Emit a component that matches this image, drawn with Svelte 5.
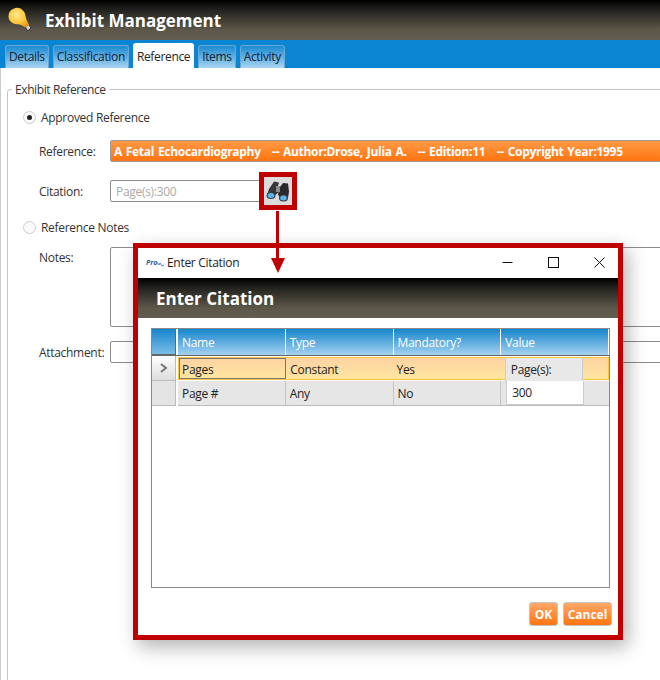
<script>
  const tabs = ['Details', 'Classification', 'Reference', 'Items', 'Activity'];
  const active = 'Reference';
  const columns = ['Name', 'Type', 'Mandatory?', 'Value'];
</script>

<div class="page">
  <header class="banner">
    <svg class="bulb" width="24" height="26" viewBox="0 0 24 26">
      <defs>
        <radialGradient id="bulbFill" cx="0.4" cy="0.35" r="0.7">
          <stop offset="0" stop-color="#ffe98a" />
          <stop offset="0.6" stop-color="#fdc63c" />
          <stop offset="1" stop-color="#e89a1c" />
        </radialGradient>
      </defs>
      <path d="M17.500 20l3-2.500 2.500 3.500-3.500 3z" fill="#d8d8d8" stroke="#333" stroke-width="1" />
      <path d="M0.500 9.500a8.500 8.500 0 0 1 15-5.500c2 2.500 2 5 2.500 7s1.500 4 3 6.500l-3.500 3c-2.500-1.500-4-2.500-6-3-3.500-.2-6-.5-8.500-2.500-1.500-1.500-2.500-3.500-2.500-5.500z" fill="url(#bulbFill)" />
    </svg>
    <h1>Exhibit Management</h1>
  </header>

  <nav class="tabs">
    {#each tabs as tab}
      <div class="tab" class:active={tab === active}>{tab}</div>
    {/each}
  </nav>

  <section class="content">
    <fieldset>
      <legend>Exhibit Reference</legend>

      <div class="radio-row">
        <span class="radio checked"></span>
        <span>Approved Reference</span>
      </div>
      <div class="row first">
        <span class="label">Reference:</span>
        <div class="field orange">A Fetal Echocardiography &nbsp; -- Author:Drose, Julia A. &nbsp; -- Edition:11 &nbsp; -- Copyright Year:1995</div>
      </div>
      <div class="row citation">
        <span class="label">Citation:</span>
        <div class="field short">Page(s):300</div>
        <div class="lookup">
          <svg width="24" height="22" viewBox="0 0 24 22">
            <path d="M8 1.500l5 1-1.500 5 1 5-6.500 5-5-2.500 2-6z" fill="#37373b" />
            <path d="M17 3l5 .5 1 8-1 6.500-7 1.500-3-5 1.500-7z" fill="#2a2a2e" />
            <path d="M10 6h4v6h-4z" fill="#8a8a8e" />
            <ellipse cx="5" cy="15.500" rx="4.500" ry="3.500" fill="#3c3c40" />
            <ellipse cx="5" cy="15.500" rx="3.300" ry="2.500" fill="#5ab4ee" />
            <ellipse cx="17.500" cy="18" rx="4.500" ry="3.500" fill="#3c3c40" />
            <ellipse cx="17.500" cy="18" rx="3.300" ry="2.500" fill="#5ab4ee" />
          </svg>
        </div>
      </div>
      <div class="radio-row notes-radio">
        <span class="radio"></span>
        <span>Reference Notes</span>
      </div>
      <div class="row notes">
        <span class="label">Notes:</span>
        <div class="field tall"></div>
      </div>
      <div class="row attachment">
        <span class="label">Attachment:</span>
        <div class="field"></div>
      </div>
    </fieldset>
  </section>

  <div class="connector">
    <span class="line"></span>
    <span class="head"></span>
  </div>

  <div class="dialog">
    <div class="titlebar">
      <span class="app-icon">Pro<svg width="7" height="7" viewBox="0 0 7 7"><path d="M0 2l2 3 1-2 2 3 2-1" fill="none" stroke="#5a7fa8" stroke-width="1" /></svg></span>
      <span class="window-title">Enter Citation</span>
      <div class="window-buttons">
        <svg width="11" height="11" viewBox="0 0 11 11"><path d="M0.500 5.500h10" stroke="#111" fill="none" /></svg>
        <svg width="11" height="11" viewBox="0 0 11 11"><rect x="0.500" y="0.500" width="10" height="10" stroke="#111" fill="none" /></svg>
        <svg width="11" height="11" viewBox="0 0 11 11"><path d="M0.500 0.500l10 10M10.500 0.500l-10 10" stroke="#111" fill="none" /></svg>
      </div>
    </div>
    <div class="dialog-banner">Enter Citation</div>

    <div class="dialog-body">
      <div class="grid">
        <div class="grid-head">
          <div class="corner"></div>
          {#each columns as col}
            <div class="col">{col}</div>
          {/each}
        </div>

        <div class="grid-row selected">
          <div class="row-head">
            <svg width="8" height="10" viewBox="0 0 8 10"><path d="M1 1l5 4-5 4" fill="none" stroke="#777" stroke-width="2" /></svg>
          </div>
          <div class="cells">
            <div class="cell focus">Pages</div>
            <div class="cell">Constant</div>
            <div class="cell">Yes</div>
            <div class="cell value"><span class="value-box grey">Page(s):</span></div>
          </div>
        </div>

        <div class="grid-row plain">
          <div class="row-head"></div>
          <div class="cells">
            <div class="cell">Page #</div>
            <div class="cell">Any</div>
            <div class="cell">No</div>
            <div class="cell value"><span class="value-box">300</span></div>
          </div>
        </div>
      </div>

      <div class="actions">
        <button class="ok">OK</button>
        <button class="cancel">Cancel</button>
      </div>
    </div>
  </div>
</div>

<style>
  :global(body) {
    margin: 0;
    background: #fff;
  }

  .page {
    position: relative;
    width: 660px;
    height: 680px;
    overflow: hidden;
    background: #fff;
    font-family: "Open Sans", "Liberation Sans", sans-serif;
    font-size: 12px;
    letter-spacing: -0.3px;
    color: #222;
  }

  .banner {
    height: 40px;
    display: flex;
    align-items: center;
    padding-left: 8px;
    gap: 13px;
    letter-spacing: 0;
    background: linear-gradient(#000 0%, #2a2823 30%, #5c5749 75%, #625d4f 100%);
  }

  .banner h1 {
    margin: 0;
    font-size: 17px;
    font-weight: 700;
    color: #fff;
  }

  .tabs {
    height: 28px;
    box-sizing: border-box;
    display: flex;
    align-items: flex-end;
    gap: 4px;
    padding-left: 5px;
    background: #0a85d1;
  }

  .tab {
    height: 23px;
    box-sizing: border-box;
    padding: 2px 3px 0;
    border: 1px solid #6aa6d6;
    border-bottom: none;
    border-radius: 3px 3px 0 0;
    background: linear-gradient(#1a8bd2, #a8d4f0);
    font-size: 12px;
    letter-spacing: -0.35px;
    color: #123;
  }

  .tab.active {
    height: 25px;
    padding: 4px 3px 0;
    background: #fff;
    border-color: #fff;
    color: #222;
  }

  .content {
    padding: 14px 0 0 7px;
    border-left: 1px solid #ccc;
  }

  fieldset {
    width: 720px;
    height: 700px;
    box-sizing: border-box;
    margin: 0 0 0 -1px;
    padding: 12px 0 0 15px;
    border: 1px solid #c4c4c4;
    border-radius: 3px;
  }

  legend {
    margin-left: -11px;
    padding: 0 3px;
    font-size: 12px;
    line-height: 15px;
    letter-spacing: -0.4px;
    color: #333;
  }

  .radio-row {
    display: flex;
    align-items: center;
    gap: 5px;
    height: 16px;
    color: #333;
  }

  .radio {
    width: 11px;
    height: 11px;
    border: 1px solid #ccc;
    border-radius: 50%;
    position: relative;
    background: #fafafa;
  }

  .radio.checked::after {
    content: "";
    position: absolute;
    left: 3px;
    top: 3px;
    width: 5px;
    height: 5px;
    border-radius: 50%;
    background: #222;
  }

  .row {
    display: flex;
    align-items: center;
    padding-left: 16px;
  }

  .row.first {
    margin-top: 15px;
  }

  .row.citation {
    margin-top: 18px;
    position: relative;
  }

  .label {
    width: 71px;
    flex: none;
    color: #333;
  }

  .field {
    flex: 1;
    height: 22px;
    box-sizing: border-box;
    border: 1px solid #8c8c8c;
    border-radius: 2px;
    padding: 2px 5px;
  }

  .field.orange {
    border-color: #9a9a9a;
    padding: 2px 3px;
    background: linear-gradient(#ff9a45, #ff7410);
    color: #fff;
    font-weight: 700;
    letter-spacing: -0.3px;
    word-spacing: 1px;
    white-space: nowrap;
  }

  .field.short {
    flex: none;
    width: 152px;
    color: #aaa;
  }

  .lookup {
    position: absolute;
    left: 236px;
    top: -8px;
    width: 28px;
    height: 28px;
    border: 5px solid #c00000;
    background: #dcdcdc;
    display: flex;
    align-items: center;
    justify-content: center;
  }

  .notes-radio {
    margin-top: 17px;
  }

  .row.notes {
    margin-top: 12px;
    align-items: flex-start;
  }

  .row.notes .label {
    padding-top: 2px;
  }

  .field.tall {
    height: 80px;
  }

  .row.attachment {
    margin-top: 14px;
  }

  /* arrow from the lookup button down to the dialog */
  .connector {
    position: absolute;
    left: 270px;
    top: 211px;
    width: 15px;
    display: flex;
    flex-direction: column;
    align-items: center;
    z-index: 3;
  }

  .connector .line {
    width: 3px;
    height: 47px;
    background: #c00000;
  }

  .connector .head {
    width: 0;
    height: 0;
    border-left: 7.500px solid transparent;
    border-right: 7.500px solid transparent;
    border-top: 15px solid #c00000;
  }

  .dialog {
    position: absolute;
    left: 133px;
    top: 243px;
    width: 490px;
    height: 397px;
    box-sizing: border-box;
    border: 5px solid #c00000;
    background: #fff;
    box-shadow: 5px 7px 18px rgba(0, 0, 0, 0.3);
    display: flex;
    flex-direction: column;
    z-index: 2;
  }

  .titlebar {
    height: 30px;
    box-sizing: border-box;
    flex: none;
    display: flex;
    align-items: center;
    padding: 0 0 2px 8px;
  }

  .app-icon {
    width: 21px;
    display: flex;
    align-items: flex-end;
    font-size: 7px;
    font-weight: 700;
    font-style: italic;
    color: #2a5a9c;
    letter-spacing: 0;
  }

  .window-title {
    font-size: 12px;
    color: #222;
  }

  .window-buttons {
    margin-left: auto;
    margin-right: 13px;
    display: flex;
    gap: 35px;
  }

  .dialog-banner {
    height: 40px;
    flex: none;
    display: flex;
    align-items: center;
    padding-left: 18px;
    font-size: 17px;
    letter-spacing: 0;
    font-weight: 700;
    color: #fff;
    background: linear-gradient(#000 0%, #2a2823 30%, #5c5749 75%, #625d4f 100%);
  }

  .dialog-body {
    flex: 1;
    display: flex;
    flex-direction: column;
    padding: 10px 8px 9px 13px;
  }

  .grid {
    flex: 1;
    border: 1px solid #888;
    display: flex;
    flex-direction: column;
  }

  .grid-head {
    display: flex;
    height: 27px;
    border-bottom: 1px solid #666;
    box-sizing: border-box;
  }

  .corner {
    width: 24px;
    box-sizing: border-box;
    flex: none;
    margin-right: 2px;
    background: linear-gradient(#1585cc, #7cbde8);
    border: 1px solid #666;
    border-top: none;
    border-left: none;
  }

  .col {
    flex: 1;
    padding: 5px 0 0 4px;
    color: #fff;
    background: linear-gradient(#1585cc, #a6d2f0);
    border-right: 1px solid #fff;
  }

  .grid-row {
    display: flex;
    height: 25px;
    box-sizing: border-box;
  }

  .row-head {
    width: 24px;
    box-sizing: border-box;
    flex: none;
    margin-right: 2px;
    display: flex;
    align-items: center;
    justify-content: center;
    background: #e4e4e4;
    border-right: 1px solid #bbb;
    border-bottom: 1px solid #bbb;
  }

  .selected .row-head {
    background: linear-gradient(#fff, #ddd);
  }

  .cells {
    flex: 1;
    display: flex;
    box-sizing: border-box;
  }

  .selected .cells {
    margin: 1px 0;
    background: linear-gradient(#fdd2a4, #ffe69e);
    border: 1px solid #fdc63d;
  }

  .plain .cells {
    background: #e6e6e6;
    border-bottom: 1px solid #bbb;
  }

  .cell {
    flex: 1;
    box-sizing: border-box;
    padding: 4px 0 0 4px;
    border-right: 1px solid #c4c4c4;
  }

  .selected .cell {
    border-right: none;
    padding-top: 3px;
    padding-left: 3px;
  }

  .selected .cell.focus {
    border: 1px solid #777;
    padding: 2px 0 0 2px;
    margin-right: 1px;
  }

  .cell.value,
  .selected .cell.value {
    border-right: none;
    padding: 0 0 0 5px;
    position: relative;
  }

  .value-box {
    display: block;
    width: 78px;
    height: 24px;
    box-sizing: border-box;
    padding: 3px 0 0 5px;
    background: #fff;
    border: 1px solid #ccc;
    border-top: none;
  }

  .value-box.grey {
    background: #e8e8e8;
    border-top: none;
  }

  .actions {
    display: flex;
    justify-content: flex-end;
    gap: 5px;
    margin-right: -2px;
    padding-top: 14px;
  }

  .actions button {
    height: 24px;
    padding: 0;
    border: 1px solid #c4c4c4;
    border-radius: 3px;
    background: linear-gradient(#ffa868, #ff7410);
    color: #fff;
    font-family: inherit;
    font-size: 12px;
    font-weight: 700;
  }

  .ok {
    width: 29px;
  }

  .cancel {
    width: 49px;
  }
</style>
